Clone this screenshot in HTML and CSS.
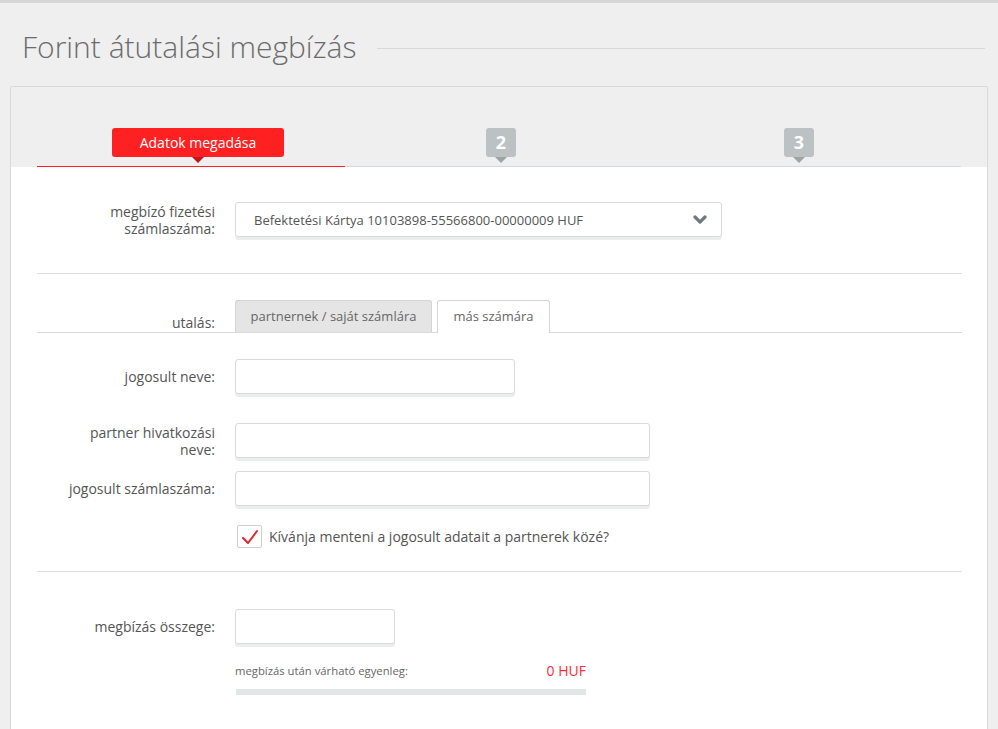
FILE: index.html
```html
<!DOCTYPE html>
<html lang="hu">
<head>
<meta charset="utf-8">
<title>Forint átutalási megbízás</title>
<link rel="stylesheet" href="styles.css">
</head>
<body>
<header class="page-head">
  <h1 class="page-title">Forint átutalási megbízás</h1>
  <div class="head-line"></div>
</header>
<main class="card">
  <div class="steps">
    <div class="step step-active">
      <div class="badge badge-red badge-1">Adatok megadása</div>
    </div>
    <div class="step">
      <div class="badge badge-gray badge-2">2</div>
    </div>
    <div class="step">
      <div class="badge badge-gray badge-3">3</div>
    </div>
  </div>
  <div class="card-body">
    <div class="row row-select">
      <div class="label">megbízó fizetési<br>számlaszáma:</div>
      <div class="select">
        <span class="select-text">Befektetési Kártya 10103898-55566800-00000009 HUF</span>
        <svg class="chev" width="14" height="10" viewBox="0 0 14 10"><polyline points="2,2 7,7 12,2" fill="none" stroke="#6f7b7f" stroke-width="3.2" stroke-linecap="round" stroke-linejoin="round"/></svg>
      </div>
    </div>
    <div class="divider div-1"></div>
    <div class="row row-tabs">
      <div class="label label-bottom">utalás:</div>
      <div class="tabs">
        <div class="tab">partnernek / saját számlára</div>
        <div class="tab tab-active">más számára</div>
      </div>
    </div>
    <div class="row row-name">
      <div class="label">jogosult neve:</div>
      <div class="input w-280"></div>
    </div>
    <div class="row row-ref">
      <div class="label">partner hivatkozási<br>neve:</div>
      <div class="input w-415"></div>
    </div>
    <div class="row row-acc">
      <div class="label">jogosult számlaszáma:</div>
      <div class="input w-415"></div>
    </div>
    <div class="row row-check">
      <div class="label"></div>
      <div class="check-wrap">
        <div class="checkbox">
          <svg width="22" height="20" viewBox="0 0 22 20"><polyline points="4,11 9,16 18,4" fill="none" stroke="#e8222a" stroke-width="2" stroke-linecap="round" stroke-linejoin="round"/></svg>
        </div>
        <span class="check-text">Kívánja menteni a jogosult adatait a partnerek közé?</span>
      </div>
    </div>
    <div class="divider div-2"></div>
    <div class="row row-amount">
      <div class="label">megbízás összege:</div>
      <div class="input w-160"></div>
    </div>
    <div class="row row-balance">
      <div class="label"></div>
      <div class="balance">
        <div class="balance-line">
          <span class="balance-label">megbízás után várható egyenleg:</span>
          <span class="balance-value">0 HUF</span>
        </div>
        <div class="balance-bar"></div>
      </div>
    </div>
  </div>
</main>
</body>
</html>
```
FILE: styles.css
```css
* { box-sizing: border-box; }
html, body { margin: 0; padding: 0; }
body {
  background: #efefef;
  border-top: 3px solid #d6d6d6;
  font-family: "Open Sans", "Liberation Sans", sans-serif;
  color: #555;
  overflow: hidden;
  height: 729px;
}
.page-head {
  height: 83px;
  padding: 5px 13px 0 22px;
  display: flex;
  align-items: center;
}
.page-title {
  margin: 0;
  font-weight: 300;
  font-size: 30px;
  line-height: 40px;
  color: #6b6b6b;
  white-space: nowrap;
}
.head-line {
  flex: 1;
  height: 1px;
  background: #d8d8d8;
  margin-left: 21px;
  margin-top: 2px;
}
.card {
  margin: 0 10px;
  width: 978px;
  border: 1px solid #d9d9d9;
  border-bottom: none;
  border-radius: 2px 2px 0 0;
  background: #fff;
  min-height: 700px;
}
.steps {
  background: #efefef;
  display: flex;
  padding: 0 26px;
}
.step {
  flex: 1;
  height: 80px;
  padding-top: 41px;
  border-bottom: 1px solid #d3dadd;
}
.step-active { border-bottom-color: #ff2020; }
.badge {
  position: relative;
  height: 29px;
  border-radius: 3px;
  color: #fff;
  text-align: center;
}
.badge::after {
  content: "";
  position: absolute;
  left: 50%;
  top: 29px;
  margin-left: -6px;
  border-left: 6px solid transparent;
  border-right: 6px solid transparent;
  border-top: 6px solid #c4151b;
}
.badge-red {
  background: #ff2121;
  font-size: 14px;
  line-height: 29px;
}
.badge-1 { margin-left: 75px; width: 172px; }
.badge-gray {
  background: #bcc1c4;
  width: 30px;
  font-size: 18px;
  font-weight: 700;
  line-height: 29px;
}
.badge-gray::after { border-top-color: #9ea3a6; }
.badge-2 { margin-left: 141px; }
.badge-3 { margin-left: 131px; }

.card-body {
  padding: 35px 25px 0 26px;
}
.row {
  display: flex;
  align-items: center;
}
.label {
  width: 178px;
  margin-right: 20px;
  flex: none;
  text-align: right;
  font-size: 14px;
  line-height: 17px;
  color: #555;
}
.select {
  width: 487px;
  height: 35px;
  border: 1px solid #dadada;
  border-radius: 3px;
  box-shadow: 0 3px 0 #eceeee;
  display: flex;
  align-items: center;
  justify-content: space-between;
  padding: 0 14px 0 18px;
}
.select-text {
  font-size: 13px;
  color: #555;
}
.chev { margin-top: 1px; }
.divider {
  height: 1px;
  background: #dedede;
}
.div-1 { margin-top: 36px; }
.row-tabs {
  margin-top: 26px;
  align-items: flex-end;
  border-bottom: 1px solid #dadada;
}
.label-bottom {
  line-height: 20px;
  margin-bottom: -1px;
}
.tabs {
  display: flex;
  align-items: flex-end;
}
.tab {
  height: 32px;
  width: 197px;
  background: #e5e5e5;
  border: 1px solid #d4d4d4;
  border-bottom: none;
  border-radius: 3px 3px 0 0;
  font-size: 13px;
  color: #666;
  text-align: center;
  line-height: 31px;
}
.tab-active {
  width: 113px;
  height: 33px;
  margin-left: 5px;
  margin-bottom: -1px;
  background: #fff;
}
.input {
  height: 35px;
  border: 1px solid #dadada;
  border-radius: 3px;
  box-shadow: 0 3px 0 #eceeee;
  background: #fff;
}
.w-280 { width: 280px; }
.w-415 { width: 415px; }
.w-160 { width: 160px; }
.row-name { margin-top: 26px; }
.row-ref { margin-top: 29px; }
.row-acc { margin-top: 13px; }
.row-check { margin-top: 19px; }
.check-wrap {
  display: flex;
  align-items: center;
}
.checkbox {
  width: 25px;
  height: 23px;
  margin-left: 2px;
  border: 1px solid #cfcfcf;
  border-radius: 2px;
  background: #fff;
  display: flex;
  align-items: center;
  justify-content: center;
}
.check-text {
  margin-left: 7px;
  font-size: 14px;
  color: #555;
}
.div-2 { margin-top: 23px; }
.row-amount { margin-top: 37px; }
.row-balance {
  margin-top: 18px;
  align-items: flex-start;
}
.balance { width: 351px; }
.balance-line {
  display: flex;
  justify-content: space-between;
  align-items: center;
  height: 16px;
}
.balance-label {
  font-size: 11.3px;
  color: #666;
}
.balance-value {
  font-size: 14px;
  color: #ff2b3a;
}
.balance-bar {
  margin-top: 11px;
  margin-left: 1px;
  height: 6px;
  width: 350px;
  background: #e3e6e6;
}
```
